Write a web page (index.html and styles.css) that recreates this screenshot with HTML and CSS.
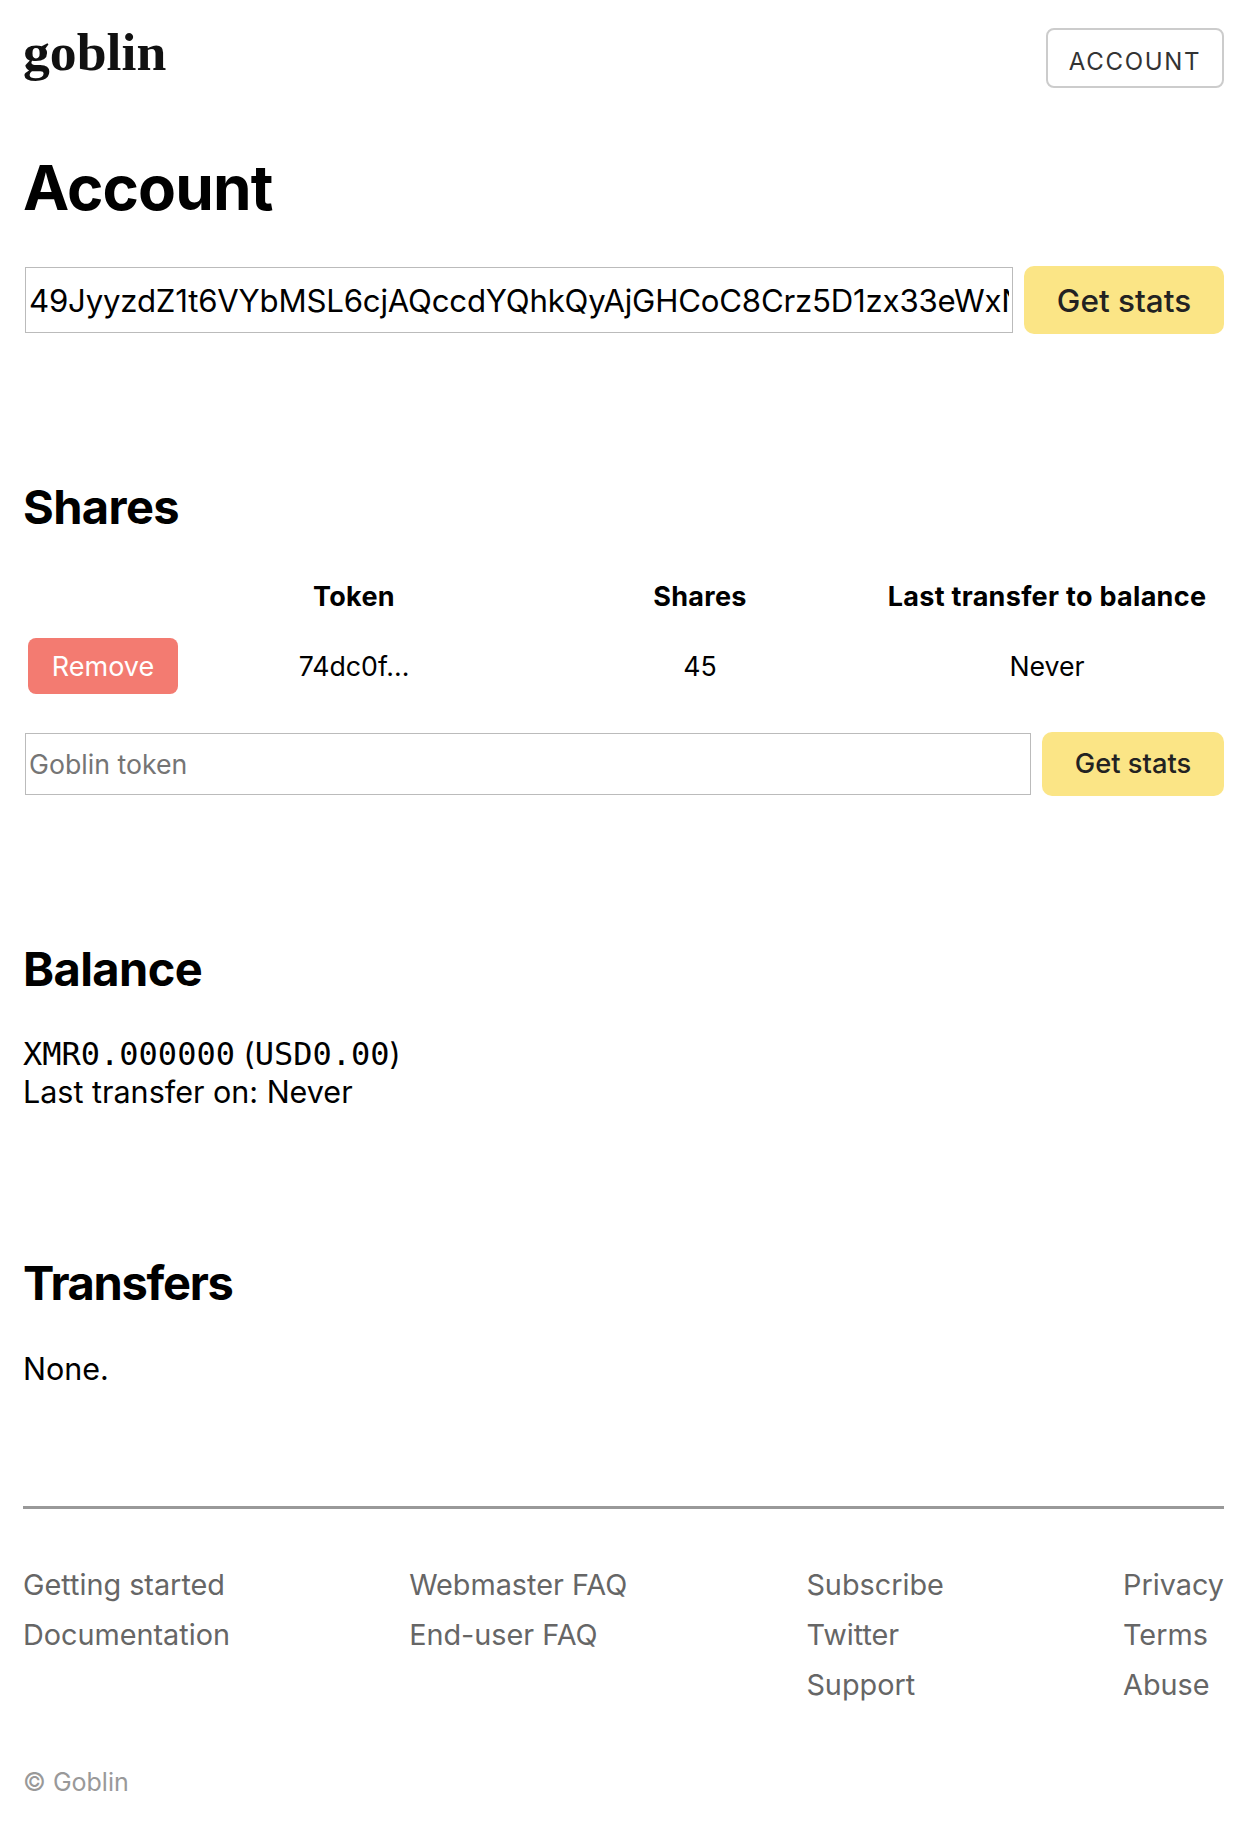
FILE: index.html
```html
<!DOCTYPE html>
<html lang="en">
<head>
<meta charset="utf-8">
<title>Goblin - Account</title>
<link rel="stylesheet" href="styles.css">
</head>
<body>
<header class="topbar">
  <a class="logo" href="#">goblin</a>
  <a class="account-btn" href="#">ACCOUNT</a>
</header>
<main>
  <h1 class="title">Account</h1>
  <form class="form form-lg">
    <input class="field" type="text" value="49JyyzdZ1t6VYbMSL6cjAQccdYQhkQyAjGHCoC8Crz5D1zx33eWxNTGqxWGmQbFWxLNhNcTQ6FfYv7Xu3bKZ8rRw5sTnPnM">
    <button class="btn-yellow" type="button">Get stats</button>
  </form>

  <section class="section shares">
    <h2 class="heading">Shares</h2>
    <table class="table">
      <colgroup><col class="c1"><col class="c2"><col class="c3"><col class="c4"></colgroup>
      <thead>
        <tr><th></th><th>Token</th><th>Shares</th><th>Last transfer to balance</th></tr>
      </thead>
      <tbody>
        <tr>
          <td class="left"><button class="btn-red" type="button">Remove</button></td>
          <td>74dc0f...</td><td>45</td><td>Never</td>
        </tr>
      </tbody>
    </table>
    <form class="form form-sm">
      <input class="field" type="text" placeholder="Goblin token">
      <button class="btn-yellow" type="button">Get stats</button>
    </form>
  </section>

  <section class="section balance">
    <h2 class="heading">Balance</h2>
    <p class="text"><code class="mono">XMR0.000000</code> (<code class="mono">USD0.00</code>)<br>Last transfer on: Never</p>
  </section>

  <section class="section transfers">
    <h2 class="heading">Transfers</h2>
    <p class="text">None.</p>
  </section>
</main>
<footer class="footer">
  <div class="links">
    <ul class="col"><li>Getting started</li><li>Documentation</li></ul>
    <ul class="col"><li>Webmaster FAQ</li><li>End-user FAQ</li></ul>
    <ul class="col"><li>Subscribe</li><li>Twitter</li><li>Support</li></ul>
    <ul class="col"><li>Privacy</li><li>Terms</li><li>Abuse</li></ul>
  </div>
  <p class="copy">© Goblin</p>
</footer>
</body>
</html>
```
FILE: styles.css
```css
* { box-sizing: border-box; }
html, body { margin: 0; padding: 0; }
body {
  padding: 28px 32px 0 23px;
  font-family: Inter, "Liberation Sans", sans-serif;
  color: #000;
  background: #fff;
  font-size: 32px;
}
.topbar { display: flex; justify-content: space-between; align-items: flex-start; height: 60px; }
.logo {
  font-family: "Liberation Serif", serif;
  font-weight: 700;
  font-size: 53.7px;
  line-height: 53px;
  margin-top: -2px;
  color: #111;
  text-decoration: none;
}
.account-btn {
  display: block;
  width: 178px;
  height: 60px;
  padding-top: 7px;
  line-height: 50px;
  text-align: center;
  border: 2px solid #ccc;
  border-radius: 8px;
  font-size: 24px;
  letter-spacing: 1.7px;
  color: #333;
  text-decoration: none;
}
.title { margin: 62px 0 0; font-size: 62px; line-height: 76px; font-weight: 700; letter-spacing: -0.9px; }
.form { display: flex; align-items: center; gap: 11px; padding-left: 2px; }
.form-lg { margin-top: 40px; height: 68px; }
.form-lg .field { font-size: 31.2px; letter-spacing: -0.2px; height: 66px; padding-top: 2px; }
.form-lg .btn-yellow { width: 200px; height: 68px; font-size: 31.5px; }
.form-sm { margin-top: 22px; height: 65px; }
.form-sm .field { font-size: 26.7px; height: 62px; }
.form-sm .btn-yellow { width: 182px; height: 64px; font-size: 27.3px; }
.field {
  flex: 1;
  min-width: 0;
  border: 1px solid #bbb;
  padding: 0 3px;
  font-family: Inter, "Liberation Sans", sans-serif;
  color: #000;
  background: #fff;
  border-radius: 0;
}
.field::placeholder { color: #757575; }
.btn-yellow {
  border: 0;
  border-radius: 10px;
  background: #fbe586;
  color: #222;
  font-family: Inter, "Liberation Sans", sans-serif;
  font-weight: 500;
  padding: 0;
}
.btn-red {
  display: block;
  width: 150px;
  height: 56px;
  border: 0;
  border-radius: 8px;
  background: #f37b71;
  color: #fff;
  font-family: Inter, "Liberation Sans", sans-serif;
  font-size: 27px;
  padding: 0;
}
.section { margin: 0; }
.shares { margin-top: 144px; }
.balance { margin-top: 144px; }
.transfers { margin-top: 143px; }
.heading { margin: 0; font-size: 47px; line-height: 58px; font-weight: 700; letter-spacing: -0.6px; }
.transfers .heading { letter-spacing: -1.3px; }
.table { width: 100%; table-layout: fixed; border-collapse: collapse; margin-top: 38px; font-size: 26.7px; }
.c1 { width: 155px; } .c2 { width: 352px; } .c3 { width: 340px; } .c4 { width: 354px; }
.table th { padding: 0 0 5px; height: 49px; font-size: 27px; font-weight: 700; text-align: center; letter-spacing: 0.3px; }
.table td { padding: 15px 0 15px; text-align: center; }
.table td.left { padding-left: 5px; }
.text { margin: 0; font-size: 30.5px; line-height: 38px; }
.balance .text { margin-top: 37px; }
.transfers .text { margin-top: 38px; }
.mono { font-family: "DejaVu Sans Mono", monospace; font-size: 32px; }
.footer { margin-top: 118px; border-top: 3px solid #999; padding-top: 51px; color: #666; }
.links { display: flex; justify-content: space-between; }
.col { list-style: none; margin: 0; padding: 0; font-size: 28.8px; line-height: 50px; }
.copy { margin: 56px 0 0; font-size: 25px; line-height: 32px; color: #999; }
```
